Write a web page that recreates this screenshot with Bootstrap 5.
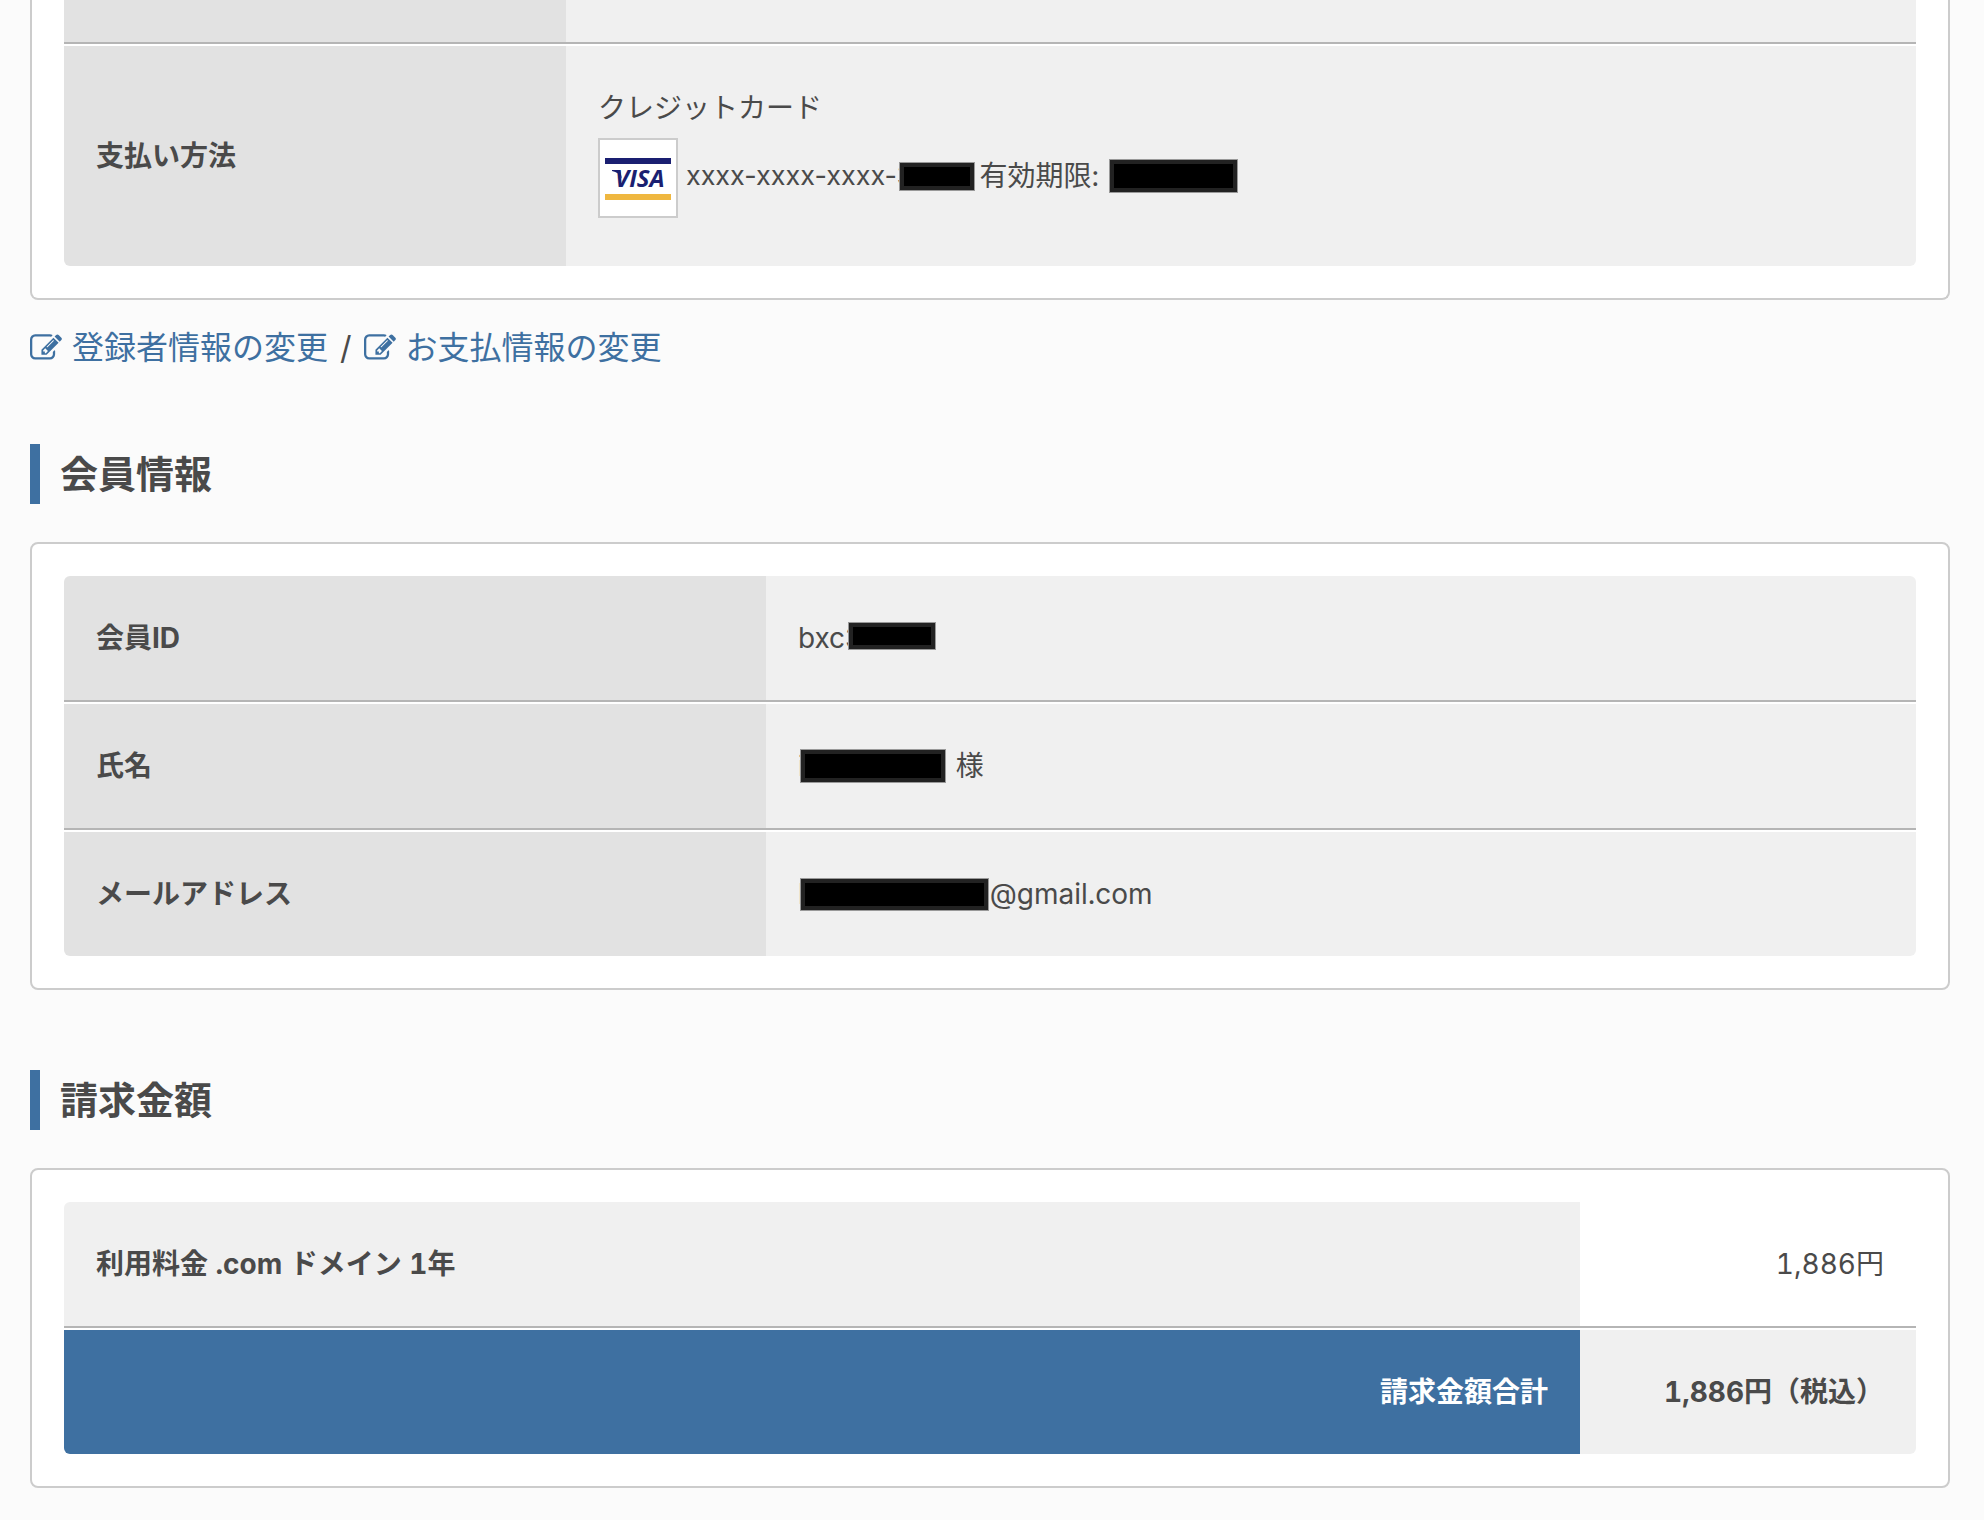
<!DOCTYPE html>
<html lang="ja">
<head>
<meta charset="utf-8">
<meta name="viewport" content="width=device-width, initial-scale=1">
<title>請求内容の確認</title>
<link href="https://cdn.jsdelivr.net/npm/bootstrap@5.3.0/dist/css/bootstrap.min.css" rel="stylesheet">
<style>
body { background: #fbfbfb; color: #4a4a4a; font-family: Inter, "Noto Sans CJK JP", sans-serif; font-size: 28px; line-height: 48px; font-variant-numeric: tabular-nums; }
.page { padding: 0 34px 30px 30px; }
.panel { background: #fff; border: 2px solid #ccc; border-radius: 8px; padding: 32px; }
.panel-cut { border-top: 0; border-top-left-radius: 0; border-top-right-radius: 0; padding-top: 0; }
.info { width: 100%; table-layout: fixed; border-collapse: separate; border-spacing: 0; border-radius: 6px; overflow: hidden; }
.panel-cut .info { border-top-left-radius: 0; border-top-right-radius: 0; }
.info th, .info td { padding: 38px 32px; vertical-align: middle; background: #f0f0f0; }
.info th { background: #e2e2e2; font-weight: 700; }
.info tr:not(:last-child) > * { border-bottom: 2px solid #b5b5b5; }
.info tr:not(:first-child) > * { border-top: 2px solid #fff; }
.info .cut-row > * { height: 44px; padding: 0; }
.info .item { background: #f0f0f0; }
.info .price { background: #fff; }
.info .sum { background: #3e70a1; color: #fff; }
.w-pay { width: 27.1%; } .w-member { width: 37.9%; } .w-bill { width: 81.86%; }
.sec-title { border-left: 10px solid #3e70a1; padding-left: 20px; margin: 80px 0 38px; font-size: 38px; line-height: 60px; font-weight: 700; }
.links { font-size: 32px; line-height: 64px; padding-top: 16px; margin-bottom: -16px; }
.links a { color: #3e70a1; text-decoration: none; }
.links svg { width: 32px; height: 32px; margin-right: 10px; }
.brand { width: 80px; height: 80px; background: #fff; border: 2px solid #ccc; margin-right: 8px; }
.pay-line { height: 92px; margin-bottom: 4px; }
.digits { font-size: 27px; font-variant-numeric: normal; }
.redact { display: inline-block; background: #000; border: 5px solid #222; outline: 1px solid #999; outline-offset: -1px; position: relative; }
.r-card { width: 76px; height: 29px; margin: 0 4px 0 -14px; }
.r-exp { width: 129px; height: 34px; margin-left: 10px; }
.r-id { width: 88px; height: 28px; margin: 0 0 4px -15px; }
.r-name { width: 146px; height: 34px; margin: 0 10px 0 -5px; }
.r-mail { width: 189px; height: 33px; margin: 0 1px 0 -5px; }
</style>
</head>
<body>
<main class="page">
  <section class="panel panel-cut">
    <table class="info">
      <tr class="cut-row"><th class="w-pay"></th><td></td></tr>
      <tr>
        <th scope="row">支払い方法</th>
        <td>
          <div>クレジットカード</div>
          <div class="pay-line d-flex align-items-center">
            <svg class="brand" viewBox="0 0 76 76" role="img" aria-label="VISA">
              <rect x="5" y="18" width="66" height="6" fill="#1a1f71"/>
              <rect x="5" y="54" width="66" height="6" fill="#efb740"/>
              <path d="M12 30h8l2 9q-3-7-10-8z" fill="#1a1f71"/>
              <text x="15" y="47" font-family="Open Sans, sans-serif" font-size="24" font-weight="700" font-style="italic" fill="#1a1f71">VISA</text>
            </svg>
            <div class="d-flex align-items-center mb-1">
              <span class="digits">xxxx-xxxx-xxxx-3</span><span class="redact r-card"></span>
              <span>有効期限:</span><span class="redact r-exp"></span>
            </div>
          </div>
        </td>
      </tr>
    </table>
  </section>

  <nav class="links d-flex align-items-center">
    <a href="#" class="d-flex align-items-center"><svg viewBox="0 0 1792 1792" fill="currentColor" aria-hidden="true"><path id="edit" d="M888 1184l116-116-152-152-116 116v56h96v96h56zm440-720q-16-16-33 1l-350 350q-17 17-1 33t33-1l350-350q17-17 1-33zm80 594v190q0 119-84.500 203.500t-203.500 84.500h-832q-119 0-203.500-84.500t-84.500-203.500v-832q0-119 84.500-203.500t203.500-84.500h832q63 0 117 25 15 7 18 23 3 17-9 29l-49 49q-14 14-32 8-23-6-45-6h-832q-66 0-113 47t-47 113v832q0 66 47 113t113 47h832q66 0 113-47t47-113v-126q0-13 9-22l64-64q15-15 35-7t20 29zm-96-738l288 288-672 672h-288v-288zm444 132l-92 92-288-288 92-92q28-28 68-28t68 28l152 152q28 28 28 68t-28 68z"/></svg>登録者情報の変更</a>
    <span class="px-2 mx-1">/</span>
    <a href="#" class="d-flex align-items-center"><svg viewBox="0 0 1792 1792" fill="currentColor" aria-hidden="true"><use href="#edit"/></svg>お支払情報の変更</a>
  </nav>

  <h2 class="sec-title">会員情報</h2>
  <section class="panel">
    <table class="info">
      <tr><th scope="row" class="w-member">会員ID</th><td><div class="d-flex align-items-center">bxc3<span class="redact r-id"></span></div></td></tr>
      <tr><th scope="row">氏名</th><td><div class="d-flex align-items-center">i<span class="redact r-name"></span>様</div></td></tr>
      <tr><th scope="row">メールアドレス</th><td><div class="d-flex align-items-center">l<span class="redact r-mail"></span>@gmail.com</div></td></tr>
    </table>
  </section>

  <h2 class="sec-title">請求金額</h2>
  <section class="panel">
    <table class="info">
      <tr><th scope="row" class="item w-bill">利用料金 .com ドメイン 1年</th><td class="price text-end">1,886円</td></tr>
      <tr><th scope="row" class="sum text-end">請求金額合計</th><td class="fw-bold text-end text-nowrap">1,886円（税込）</td></tr>
    </table>
  </section>
</main>
<script src="https://cdn.jsdelivr.net/npm/bootstrap@5.3.0/dist/js/bootstrap.bundle.min.js"></script>
</body>
</html>
